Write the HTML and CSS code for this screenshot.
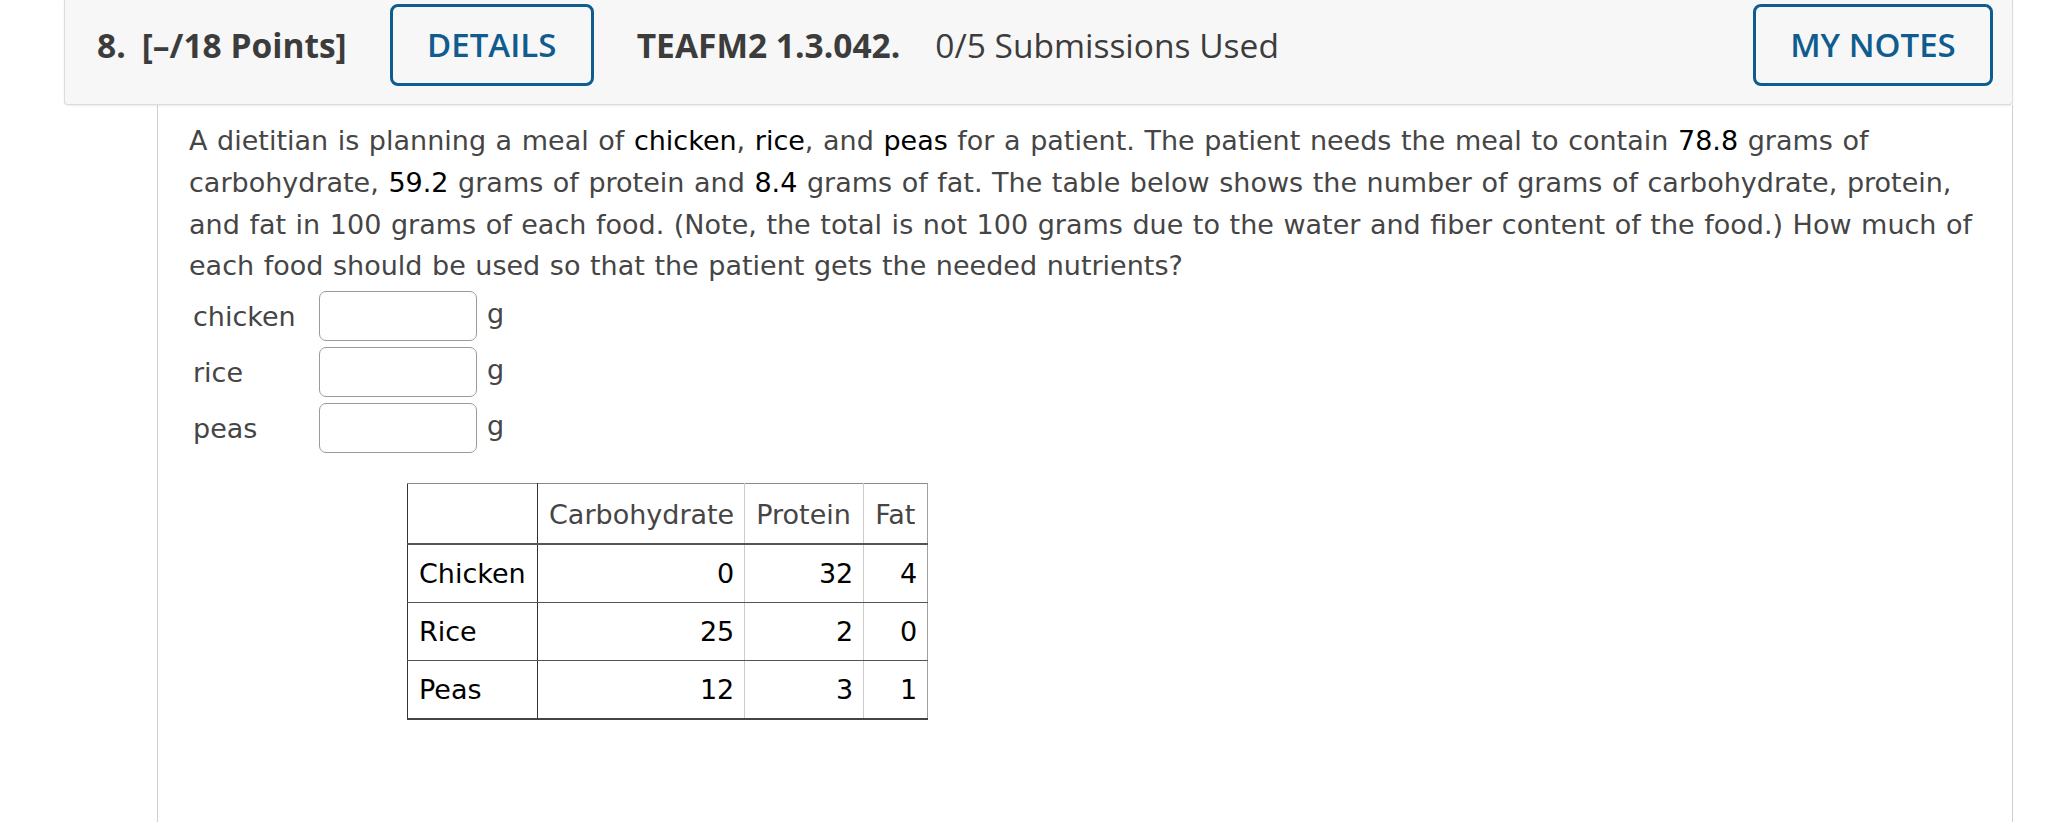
FILE: index.html
```html
<!DOCTYPE html>
<html>
<head>
<meta charset="utf-8">
<link rel="stylesheet" href="styles.css">
</head>
<body>
<div class="question">
  <div class="qhead">
    <span class="qnum">8.</span>
    <span class="qpoints">[–/18 Points]</span>
    <button class="btn details">DETAILS</button>
    <span class="qid">TEAFM2 1.3.042.</span>
    <span class="qsub">0/5 Submissions Used</span>
    <span class="spacer"></span>
    <button class="btn notes">MY NOTES</button>
  </div>
  <div class="qbody">
    <p class="prompt">A dietitian is planning a meal of <span class="em">chicken</span>, <span class="em">rice</span>, and <span class="em">peas</span> for a patient. The patient needs the meal to contain <span class="em">78.8</span> grams of carbohydrate, <span class="em">59.2</span> grams of protein and <span class="em">8.4</span> grams of fat. The table below shows the number of grams of carbohydrate, protein, and fat in 100 grams of each food. (Note, the total is not 100 grams due to the water and fiber content of the food.) How much of each food should be used so that the patient gets the needed nutrients?</p>
    <div class="answers">
      <span class="lbl">chicken</span><span class="inp"></span><span class="unit">g</span>
      <span class="lbl">rice</span><span class="inp"></span><span class="unit">g</span>
      <span class="lbl">peas</span><span class="inp"></span><span class="unit">g</span>
    </div>
    <table class="nutri">
      <tr class="hrow"><th class="c0"></th><th class="c1">Carbohydrate</th><th class="c2">Protein</th><th class="c3">Fat</th></tr>
      <tr><td class="c0">Chicken</td><td class="c1">0</td><td class="c2">32</td><td class="c3">4</td></tr>
      <tr><td class="c0">Rice</td><td class="c1">25</td><td class="c2">2</td><td class="c3">0</td></tr>
      <tr class="last"><td class="c0">Peas</td><td class="c1">12</td><td class="c2">3</td><td class="c3">1</td></tr>
    </table>
  </div>
</div>
</body>
</html>
```
FILE: styles.css
```css
html, body {
  margin: 0;
  padding: 0;
  background: #ffffff;
}
body {
  height: 822px;
  overflow: hidden;
}
.question {
  margin-left: 64px;
  width: 1949px;
}
.qhead {
  display: flex;
  align-items: center;
  box-sizing: border-box;
  height: 105px;
  padding: 3px 19px 18px 32px;
  background: #f7f7f7;
  border: 1px solid #dcdcdc;
  border-top: none;
  border-radius: 0 0 4px 4px;
  box-shadow: 0 1px 2px rgba(0,0,0,0.08);
  font-family: "Open Sans", "Liberation Sans", sans-serif;
  font-size: 33.5px;
  color: #3c3c3c;
}
.qnum {
  font-weight: 700;
  margin-right: 16px;
}
.qpoints {
  font-weight: 700;
  margin-right: 43px;
}
.btn {
  box-sizing: border-box;
  height: 82px;
  border: 3px solid #0f5c8e;
  border-radius: 8px;
  background: #f7f7f7;
  color: #0f5c8e;
  font-family: "Open Sans", "Liberation Sans", sans-serif;
  font-size: 33px;
  font-weight: 600;
  padding: 0;
}
.details {
  width: 204px;
  margin-right: 43px;
}
.notes {
  width: 240px;
}
.qid {
  font-weight: 700;
  margin-right: 35px;
}
.qsub {
  font-weight: 400;
}
.spacer {
  flex: 1;
}
.qbody {
  margin-left: 93px;
  width: 1856px;
  box-sizing: border-box;
  min-height: 720px;
  border-left: 1px solid #cfcfcf;
  border-right: 1px solid #cfcfcf;
  padding: 15px 26px 0 31px;
  font-family: "DejaVu Sans", Verdana, sans-serif;
  font-size: 27px;
  color: #454545;
}
.prompt {
  margin: 0;
  line-height: 41.8px;
  word-spacing: 1px;
}
.em {
  color: #000000;
}
.answers {
  display: grid;
  grid-template-columns: 126px 158px auto;
  grid-auto-rows: 50px;
  row-gap: 6px;
  align-items: center;
  margin-top: 4px;
  margin-left: 4px;
}
.inp {
  box-sizing: border-box;
  height: 50px;
  border: 1.5px solid #9a9a9a;
  border-radius: 7px;
  background: #fff;
}
.unit {
  padding-left: 10px;
  margin-top: -6px;
}
.nutri {
  margin-top: 30px;
  margin-left: 218px;
  border-collapse: collapse;
  border-top: 1px solid #8a8a8a;
  border-left: 1px solid #333;
  border-right: 1px solid #a0a0a0;
  border-bottom: 2px solid #444;
}
.nutri th, .nutri td {
  padding: 0 10px 0 11px;
  font-weight: 400;
  line-height: 30px;
}
.nutri th {
  height: 57px;
  color: #454545;
  text-align: left;
  border-bottom: 2px solid #555;
  padding-top: 2px;
}
.nutri td {
  height: 57px;
  color: #000;
  text-align: right;
  border-bottom: 1px solid #555;
}
.nutri .c0 {
  width: 108px;
  text-align: left;
  border-right: 1px solid #333;
}
.nutri .c1 {
  width: 185px;
  border-right: 1px solid #cccccc;
}
.nutri .c2 {
  width: 97px;
  border-right: 1px solid #cccccc;
}
.nutri .c3 {
  width: 42px;
}
.nutri .last td {
  border-bottom: none;
}
```
